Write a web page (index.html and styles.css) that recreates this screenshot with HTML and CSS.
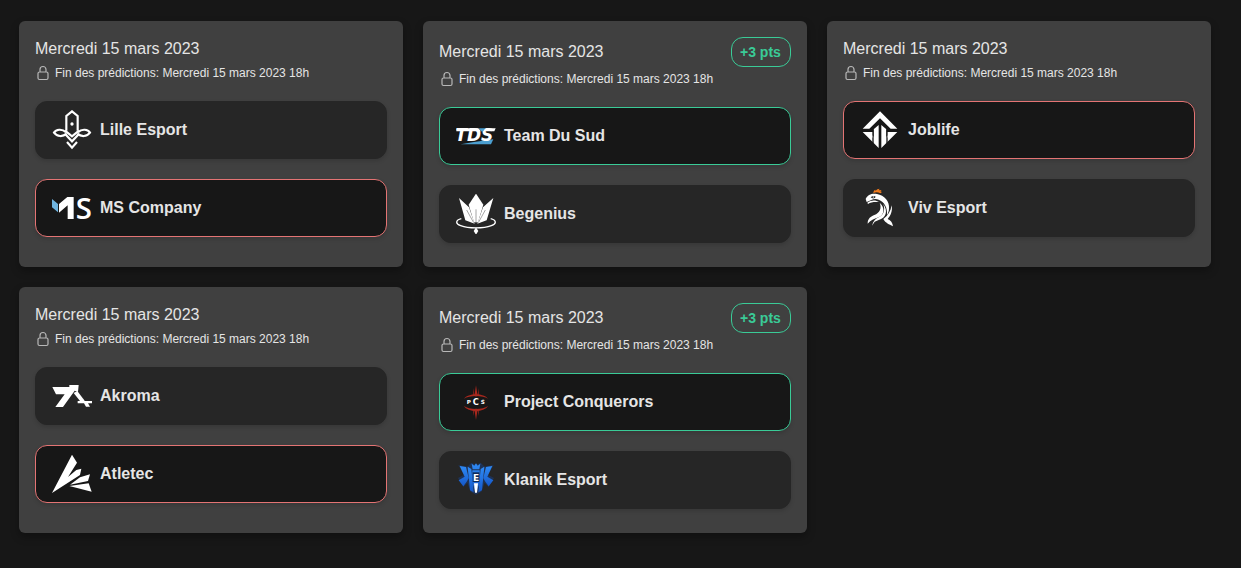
FILE: index.html
```html
<!DOCTYPE html>
<html lang="fr">
<head>
<meta charset="utf-8">
<meta name="viewport" content="width=device-width, initial-scale=1">
<title>Prédictions</title>
<link rel="stylesheet" href="styles.css">
</head>
<body>
<svg class="defs" aria-hidden="true">
  <symbol id="lock" viewBox="0 0 24 24">
    <path fill="none" stroke="currentColor" stroke-width="1.8" stroke-linecap="round" stroke-linejoin="round" d="M16.5 10.5V6.75a4.5 4.5 0 1 0-9 0v3.75m-.75 11.25h10.5a2.25 2.25 0 0 0 2.25-2.25v-6.75a2.25 2.25 0 0 0-2.25-2.25H6.75a2.25 2.25 0 0 0-2.25 2.25v6.75a2.25 2.25 0 0 0 2.25 2.25Z"/>
  </symbol>
</svg>
<main class="matches">
  <article class="card">
    <header class="card-head"><h2 class="date">Mercredi 15 mars 2023</h2></header>
    <p class="deadline"><svg class="lock" aria-hidden="true"><use href="#lock"/></svg>Fin des prédictions: Mercredi 15 mars 2023 18h</p>
    <div class="teams">
      <button type="button" class="team">
        <svg class="logo" viewBox="24 18 120 120" aria-hidden="true">
          <g fill="none" stroke="#fff" stroke-width="6.5">
            <path d="M67 80V36L84 22 101 36V80"/>
            <path d="M66 85C54 73 36 76 30 86c10 13 26 13 38 3M102 85c12-12 30-9 36 1-10 13-26 13-38 3"/>
            <path d="M63 80 84 97 105 80M64 91 84 112 104 91"/>
            <path d="M69 114 84 131 99 114"/>
          </g>
          <circle cx="84" cy="60" r="5" fill="#fff"/>
        </svg>
        Lille Esport
      </button>
      <button type="button" class="team lost">
        <svg class="logo" viewBox="24 18 120 120" aria-hidden="true">
          <path fill="#6fb4e0" d="M24 51 42 66V91L24 76Z"/>
          <path fill="#fff" d="M45 66 70 45H89V111H71V70L45 92Z"/>
          <text x="95" y="111" class="logo-s">S</text>
        </svg>
        MS Company
      </button>
    </div>
  </article>

  <article class="card">
    <header class="card-head"><h2 class="date">Mercredi 15 mars 2023</h2><span class="points">+3 pts</span></header>
    <p class="deadline"><svg class="lock" aria-hidden="true"><use href="#lock"/></svg>Fin des prédictions: Mercredi 15 mars 2023 18h</p>
    <div class="teams">
      <button type="button" class="team won">
        <svg class="logo" viewBox="24 18 120 120" aria-hidden="true">
          <path fill="#4c9fd0" d="M38 103l40-7 58-8-7 15Z"/>
          <text x="22" y="94" class="logo-tds">TDS</text>
          <path fill="#fff" d="M28 55H91l8 9H25ZM114 55h29l-4 9h-32Z"/>
          <path fill="#4c9fd0" d="m92 55 20 0-9 12Z"/>
        </svg>
        Team Du Sud
      </button>
      <button type="button" class="team">
        <svg class="logo" viewBox="24 18 120 120" aria-hidden="true">
          <g fill="#fff">
            <path d="M84 17 106 50 90 103H78L62 50Z"/>
            <path d="M33 30 63 58 80 107 52 97ZM136 30 105 58 88 107 116 97Z"/>
            <path d="M84 118 91 129 84 140 77 129Z"/>
          </g>
          <path fill="none" stroke="#fff" stroke-width="4" d="M40 92C24 96 20 106 38 113c24 9 68 9 92 0 18-7 14-17-2-21"/>
          <path stroke="#777" stroke-width="2" d="M84 64v40M56 66l21 38M112 66l-21 38"/>
        </svg>
        Begenius
      </button>
    </div>
  </article>

  <article class="card">
    <header class="card-head"><h2 class="date">Mercredi 15 mars 2023</h2></header>
    <p class="deadline"><svg class="lock" aria-hidden="true"><use href="#lock"/></svg>Fin des prédictions: Mercredi 15 mars 2023 18h</p>
    <div class="teams">
      <button type="button" class="team lost">
        <svg class="logo" viewBox="24 18 120 120" aria-hidden="true">
          <g fill="#fff">
            <path d="M84 22 136 74H116L84 43 52 74H32Z"/>
            <path d="M80 63V132L32 84H51L65 98V76ZM88 63V132L136 84H117L103 98V76Z"/>
          </g>
          <path stroke="#171717" stroke-width="4" d="M63 76v42M105 76v42"/>
          <path fill="#fff" d="M44 84H61V101ZM124 84H107V101Z"/>
        </svg>
        Joblife
      </button>
      <button type="button" class="team">
        <svg class="logo" viewBox="24 18 120 120" aria-hidden="true">
          <path fill="#f07a1c" d="M64 34c0-7 3-10 6-11l1 4c3-5 7-7 12-7l-3 5 9-1-4 4 5 2-5 4c-8-4-15-4-21 0Z"/>
          <path fill="#fff" d="M41 51c6-14 20-18 34-15 22 4 38 22 36 43 0 8-2 14-6 20 2-22-8-40-25-46-8-3-16-2-22 1l-14 6Z"/>
          <path fill="#262626" d="M56 46c5-5 11-5 15-2-3 6-9 7-15 2Z"/>
          <circle cx="64" cy="45" r="2" fill="#fff"/>
          <path fill="#fff" d="M46 62c12-9 26-8 35-2-14-1-25 0-33 6Z"/>
          <path fill="#fff" d="M83 62c17 15 14 36-3 44-11 4-24 8-33 19 0-16 10-22 20-26 16-6 23-20 16-37Z"/>
          <path fill="#fff" d="M94 66c15 22 8 42-14 48l-12 5-8 12c4-14 10-21 20-25 15-7 20-22 14-40Z"/>
          <path fill="#fff" d="M119 70c3 18-3 31-12 41 10 4 14 10 16 22-12-7-22-9-29-22 14-10 22-23 25-41Z"/>
        </svg>
        Viv Esport
      </button>
    </div>
  </article>

  <article class="card">
    <header class="card-head"><h2 class="date">Mercredi 15 mars 2023</h2></header>
    <p class="deadline"><svg class="lock" aria-hidden="true"><use href="#lock"/></svg>Fin des prédictions: Mercredi 15 mars 2023 18h</p>
    <div class="teams">
      <button type="button" class="team">
        <svg class="logo" viewBox="24 18 120 120" aria-hidden="true">
          <g fill="#fff">
            <path d="M25 51H76V45H104L102 66 92 62 57 111H34L62 73H36Z"/>
            <path d="M89 69 100 63 122 92 111 97Z"/>
            <path d="M101 93H144V100H132L138 110H126L120 100H101Z"/>
          </g>
        </svg>
        Akroma
      </button>
      <button type="button" class="team lost">
        <svg class="logo" viewBox="24 18 120 120" aria-hidden="true">
          <g fill="#fff">
            <path d="M84 20 99 44 72 87 97 66 112 62 108 81 24 135Z"/>
            <path d="M78 110 108 88 138 79 132 99Z"/>
            <path d="M76 114 134 106 143 131Z"/>
          </g>
        </svg>
        Atletec
      </button>
    </div>
  </article>

  <article class="card">
    <header class="card-head"><h2 class="date">Mercredi 15 mars 2023</h2><span class="points">+3 pts</span></header>
    <p class="deadline"><svg class="lock" aria-hidden="true"><use href="#lock"/></svg>Fin des prédictions: Mercredi 15 mars 2023 18h</p>
    <div class="teams">
      <button type="button" class="team won">
        <svg class="logo" viewBox="24 18 120 120" aria-hidden="true">
          <g fill="#a8281e">
            <path d="M84 28 88 54 84 64 80 54ZM84 132 88 106 84 96 80 106Z"/>
            <path d="M76 36 79 56 76 60ZM92 36 89 56 92 60ZM76 120 79 104 76 100ZM92 120 89 104 92 100Z"/>
            <path d="M48 68C60 50 108 50 120 68 104 57 64 57 48 68ZM48 90C60 110 108 110 120 90 104 102 64 102 48 90Z"/>
          </g>
          <text x="56" y="85" class="logo-pcs">P</text>
          <text x="74" y="88" class="logo-pcs logo-pcs-mid">C</text>
          <text x="98" y="85" class="logo-pcs">S</text>
        </svg>
        Project Conquerors
      </button>
      <button type="button" class="team">
        <svg class="logo" viewBox="24 18 120 120" aria-hidden="true">
          <defs>
            <linearGradient id="blue" x1="0" y1="0" x2="0" y2="1"><stop offset="0" stop-color="#2f8bf5"/><stop offset="1" stop-color="#1557c8"/></linearGradient>
          </defs>
          <path fill="#173c7c" d="M31 33 58 38 70 26 84 32 98 26 110 38 137 33 120 62 138 72 122 99 110 86 100 113 84 122 68 113 58 86 46 99 30 72 48 62Z" opacity=".55"/>
          <g fill="url(#blue)">
            <path d="M35 36 54 39 62 72 57 82 46 97 32 79 50 68ZM133 36 114 39 106 72 111 82 122 97 136 79 118 68Z"/>
            <path d="M59 38 70 45 77 115 66 109ZM109 38 98 45 91 115 102 109Z"/>
            <path d="M71 29 79 35 84 28 89 35 97 29 94 46H74ZM73 49H95L96 83 84 118 72 83Z"/>
          </g>
          <path fill="#102a58" d="M74 55H94V84H74Z"/>
          <text x="75" y="81" class="logo-e">E</text>
          <path fill="#fff" d="M78 88H90L87 116H81Z"/>
        </svg>
        Klanik Esport
      </button>
    </div>
  </article>
</main>
</body>
</html>
```
FILE: styles.css
```css
* {
  box-sizing: border-box;
}

body {
  margin: 0;
  background: #171717;
  color: #e5e5e5;
  font-family: "Liberation Sans", Arial, sans-serif;
  font-size: 16px;
  line-height: 24px;
}

.defs {
  position: absolute;
  width: 0;
  height: 0;
}

.matches {
  display: grid;
  grid-template-columns: repeat(3, 1fr);
  gap: 20px;
  padding: 21px 30px 35px 19px;
}

.card {
  padding: 16px 16px 24px;
  border-radius: 6px;
  background: #404040;
  box-shadow: 0 4px 8px rgba(0, 0, 0, 0.3);
}

.card-head {
  display: flex;
  align-items: center;
  justify-content: space-between;
}

.date {
  margin: 0;
  font-size: 16px;
  font-weight: 400;
}

.points {
  min-width: 60px;
  padding: 4px 8px;
  border: 1px solid #3acb97;
  border-radius: 12px;
  color: #3acb97;
  font-size: 14px;
  font-weight: 700;
  line-height: 20px;
}

.deadline {
  display: flex;
  align-items: center;
  gap: 4px;
  margin: 0 0 16px;
  font-size: 12px;
}

.lock {
  width: 16px;
  height: 16px;
  color: #b8b8b8;
}

.teams {
  display: flex;
  flex-direction: column;
  gap: 20px;
}

.team {
  display: flex;
  align-items: center;
  gap: 8px;
  width: 100%;
  padding: 8px 16px;
  border: 1px solid #262626;
  border-radius: 12px;
  background: #262626;
  box-shadow: 0 2px 4px rgba(0, 0, 0, 0.15);
  color: #e5e5e5;
  font: inherit;
  font-weight: 700;
  text-align: left;
  cursor: pointer;
}

.won {
  border-color: #3acb97;
  background: #171717;
}

.lost {
  border-color: #e47474;
  background: #171717;
}

.logo {
  flex: none;
  width: 40px;
  height: 40px;
}

.logo text {
  fill: #fff;
}

.logo-s {
  font: 600 88px "Open Sans", sans-serif;
}

.logo-tds {
  font: italic 700 51px "DejaVu Sans", sans-serif;
}

.logo-pcs {
  font: 700 17px "DejaVu Sans", sans-serif;
}

.logo-pcs-mid {
  font-size: 25px;
}

.logo-e {
  font: 700 27px "DejaVu Sans", sans-serif;
}
```
